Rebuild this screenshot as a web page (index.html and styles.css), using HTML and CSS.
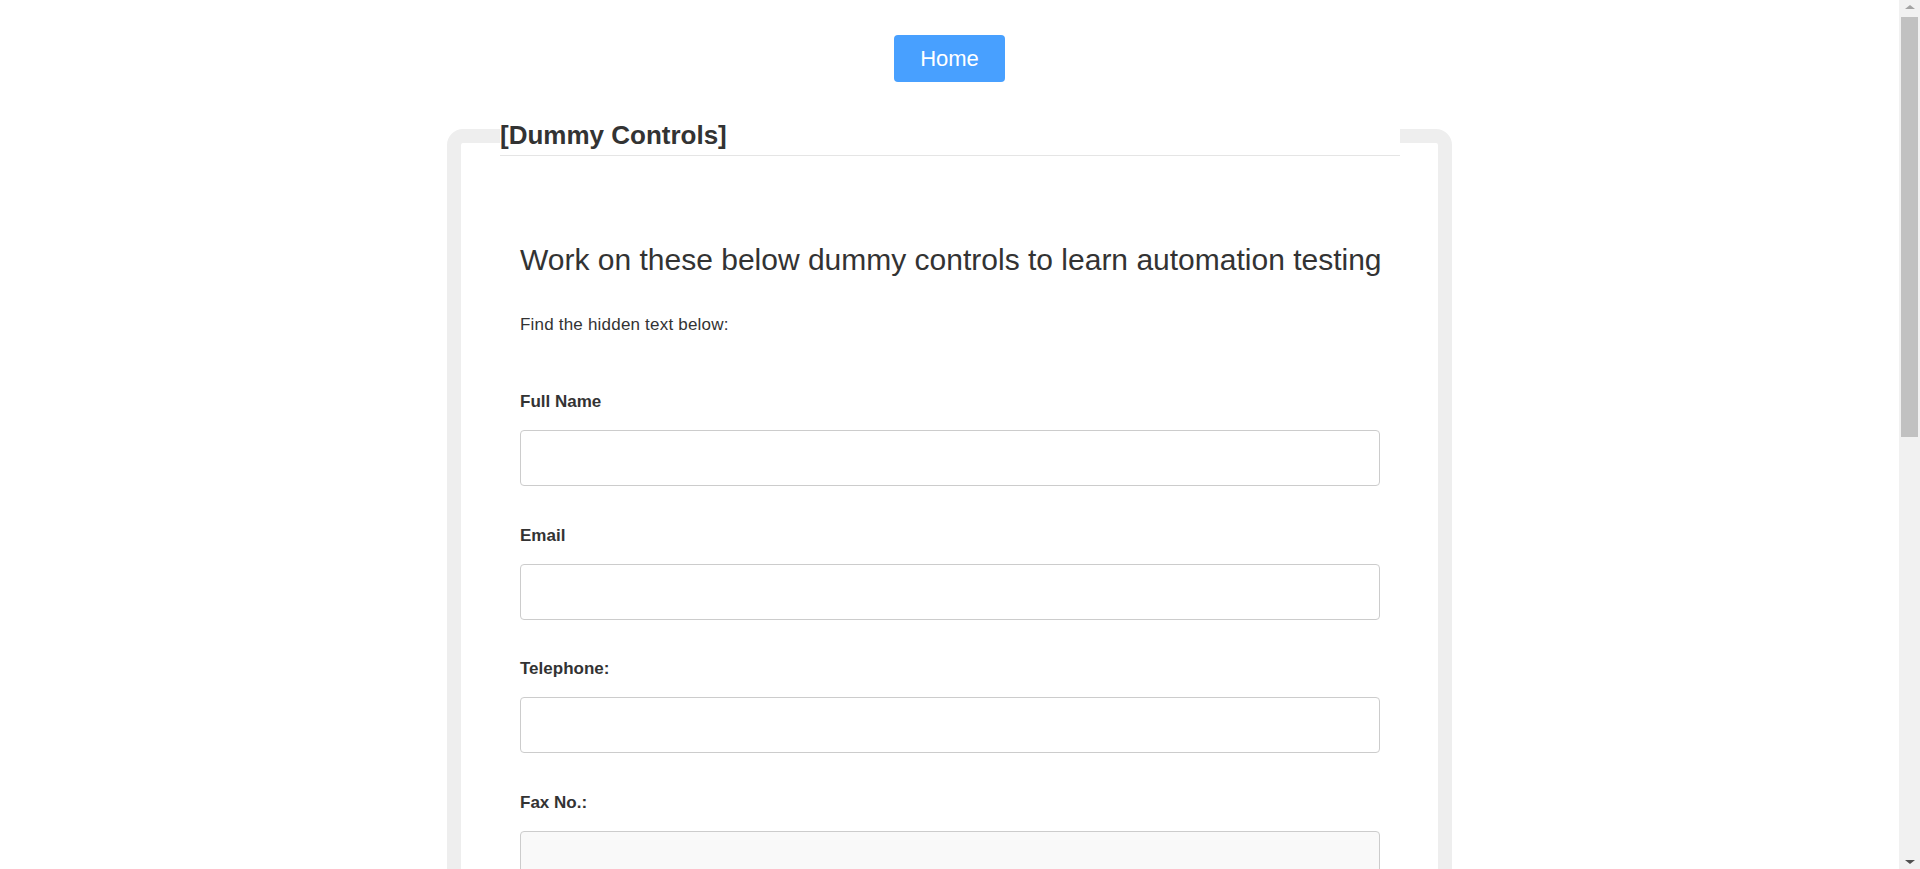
FILE: index.html
```html
<!DOCTYPE html>
<html lang="en">
<head>
<meta charset="utf-8">
<title>Dummy Controls</title>
<link rel="stylesheet" href="styles.css">
</head>
<body>
<div class="page">
  <nav class="topnav">
    <a class="home-btn" href="#">Home</a>
  </nav>
  <fieldset class="panel">
    <legend class="panel-legend">[Dummy Controls]</legend>
    <div class="panel-body">
      <h2 class="intro">Work on these below dummy controls to learn automation testing</h2>
      <p class="hint">Find the hidden text below:</p>
      <form class="form">
        <div class="group">
          <label class="label" for="fullname">Full Name</label>
          <input class="field" id="fullname" type="text">
        </div>
        <div class="group">
          <label class="label" for="email">Email</label>
          <input class="field" id="email" type="text">
        </div>
        <div class="group">
          <label class="label" for="tel">Telephone:</label>
          <input class="field" id="tel" type="text">
        </div>
        <div class="group">
          <label class="label" for="fax">Fax No.:</label>
          <input class="field field-readonly" id="fax" type="text" readonly>
        </div>
        <div class="group">
          <label class="label" for="addr">Address:</label>
          <input class="field" id="addr" type="text">
        </div>
        <div class="group">
          <label class="label" for="city">City:</label>
          <input class="field" id="city" type="text">
        </div>
        <div class="group">
          <label class="label" for="state">State:</label>
          <input class="field" id="state" type="text">
        </div>
        <div class="group">
          <label class="label" for="zip">Zip Code:</label>
          <input class="field" id="zip" type="text">
        </div>
        <div class="group">
          <label class="label" for="country">Country:</label>
          <input class="field" id="country" type="text">
        </div>
        <div class="actions">
          <button class="submit" type="button">Submit</button>
        </div>
      </form>
    </div>
  </fieldset>
</div>
<div class="scrollbar" aria-hidden="true">
  <span class="sb-arrow sb-up"></span>
  <div class="sb-track">
    <div class="sb-thumb"></div>
  </div>
  <span class="sb-arrow sb-down"></span>
</div>
</body>
</html>
```

FILE: styles.css
```css
html {
  background: #ffffff;
  scrollbar-width: none;
}
::-webkit-scrollbar {
  width: 0;
  height: 0;
}
body {
  margin: 0;
  font-family: "Liberation Sans", Arial, Helvetica, sans-serif;
  font-size: 17px;
  color: #333333;
}
.page {
  margin-right: 21px;
  padding: 35px 0 40px;
}
.topnav {
  display: flex;
  justify-content: center;
}
.home-btn {
  display: block;
  width: 111px;
  height: 47px;
  line-height: 47px;
  text-align: center;
  background: #48a0ff;
  color: #ffffff;
  font-size: 22px;
  text-decoration: none;
  border-radius: 4px;
}
.panel {
  box-sizing: content-box;
  width: 900px;
  margin: 34px auto 0;
  padding: 0 38px 40px 39px;
  border: 14px solid #eeeeee;
  border-radius: 16px;
  min-width: 0;
}
.panel-legend {
  display: block;
  box-sizing: border-box;
  width: 100%;
  padding: 0;
  font-size: 26px;
  font-weight: bold;
  line-height: 39px;
  color: #333333;
  border-bottom: 1px solid #e5e5e5;
}
.panel-body {
  padding: 87px 20px 0;
}
.intro {
  margin: 0 0 37px;
  font-size: 30px;
  font-weight: normal;
  line-height: 33px;
  white-space: nowrap;
}
.hint {
  margin: 0 0 53px;
  line-height: 24px;
  letter-spacing: 0.2px;
}
.form {
  margin: 0;
}
.group {
  display: flex;
  flex-direction: column;
  margin-bottom: 37.5px;
}
.label {
  font-weight: bold;
  line-height: 24px;
  margin-bottom: 16px;
}
.field {
  box-sizing: border-box;
  height: 56px;
  width: 100%;
  padding: 6px 12px;
  font-family: inherit;
  font-size: 17px;
  color: #555555;
  background: #ffffff;
  border: 1px solid #cccccc;
  border-radius: 4px;
  outline: none;
}
.field-readonly {
  background: #f9f9f9;
}
.actions {
  display: flex;
}
.submit {
  height: 47px;
  padding: 0 26px;
  font-family: inherit;
  font-size: 20px;
  color: #ffffff;
  background: #48a0ff;
  border: 0;
  border-radius: 4px;
}

/* emulated browser scrollbar, fixed over the right edge */
.scrollbar {
  position: fixed;
  top: 0;
  right: 0;
  bottom: 0;
  width: 21px;
  background: #f1f1f1;
  display: flex;
  flex-direction: column;
  align-items: center;
}
.sb-arrow {
  width: 0;
  height: 0;
  box-sizing: content-box;
}
.sb-up {
  margin-top: 5px;
  border-left: 5px solid transparent;
  border-right: 5px solid transparent;
  border-bottom: 4px solid #a3a3a3;
}
.sb-track {
  flex: 1;
  width: 100%;
  padding: 8px 2px 0;
  box-sizing: border-box;
}
.sb-thumb {
  height: 420px;
  background: #c1c1c1;
}
.sb-down {
  margin-bottom: 5px;
  border-left: 5px solid transparent;
  border-right: 5px solid transparent;
  border-top: 4px solid #505050;
}
```
